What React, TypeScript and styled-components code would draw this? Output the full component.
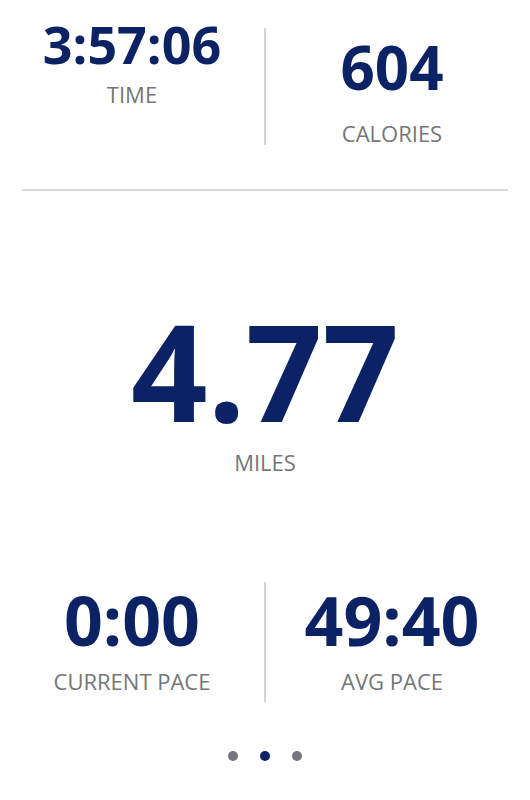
import styled, { createGlobalStyle } from "styled-components";

const NAVY = "#0b2264";
const GREY = "#767676";

const GlobalStyle = createGlobalStyle`
  html, body {
    margin: 0;
    padding: 0;
    background: #ffffff;
    font-family: "Open Sans", "Noto Sans", sans-serif;
  }
`;

type StatProps = {
  value: string;
  label: string;
  size: number;
  offset: number;
  gap: number;
};

function Stat({ value, label, size, offset, gap }: StatProps) {
  return (
    <StatBox $offset={offset}>
      <Value $size={size}>{value}</Value>
      <Label $gap={gap}>{label}</Label>
    </StatBox>
  );
}

export default function App() {
  return (
    <>
      <GlobalStyle />
      <Screen>
        <TopRow>
          <Stat value="3:57:06" label="TIME" size={52} offset={18} gap={13} />
          <Divider $top={28} $height={117} />
          <Stat value="604" label="CALORIES" size={60} offset={37} gap={25} />
        </TopRow>
        <Rule />
        <Main>
          <BigValue>4.77</BigValue>
          <Label $gap={14}>MILES</Label>
        </Main>
        <BottomRow>
          <Stat value="0:00" label="CURRENT PACE" size={68} offset={4} gap={16} />
          <Divider $top={0} $height={120} />
          <Stat value="49:40" label="AVG PACE" size={68} offset={4} gap={16} />
        </BottomRow>
        <Dots>
          <Dot />
          <Dot $active />
          <Dot />
        </Dots>
      </Screen>
    </>
  );
}

const Screen = styled.div`
  width: 530px;
  height: 800px;
  display: flex;
  flex-direction: column;
  overflow: hidden;
`;

const TopRow = styled.div`
  height: 189px;
  display: grid;
  grid-template-columns: 264px 2px 252px;
  align-items: start;
`;

const BottomRow = styled.div`
  margin-top: 109px;
  display: grid;
  grid-template-columns: 264px 2px 252px;
  align-items: start;
`;

const StatBox = styled.div<{ $offset: number }>`
  margin-top: ${(p) => p.$offset}px;
  display: flex;
  flex-direction: column;
  align-items: center;
`;

const Value = styled.div<{ $size: number }>`
  font-size: ${(p) => p.$size}px;
  line-height: 1;
  font-weight: 700;
  color: ${NAVY};
  white-space: nowrap;
`;

const Label = styled.div<{ $gap: number }>`
  margin-top: ${(p) => p.$gap}px;
  font-size: 22px;
  line-height: 1;
  font-weight: 400;
  color: ${GREY};
  white-space: nowrap;
`;

const Divider = styled.div<{ $top: number; $height: number }>`
  margin-top: ${(p) => p.$top}px;
  height: ${(p) => p.$height}px;
  width: 2px;
  background: #d4d4d4;
`;

const Rule = styled.div`
  margin: 0 22px;
  height: 2px;
  background: #d8d8d8;
`;

const Main = styled.div`
  margin-top: 112px;
  display: flex;
  flex-direction: column;
  align-items: center;
`;

const BigValue = styled.div`
  font-size: 134px;
  line-height: 1;
  font-weight: 700;
  color: ${NAVY};
`;

const Dots = styled.div`
  margin-top: 49px;
  display: flex;
  justify-content: center;
  gap: 22px;
`;

const Dot = styled.span<{ $active?: boolean }>`
  width: 10px;
  height: 10px;
  border-radius: 50%;
  background: ${(p) => (p.$active ? NAVY : "#77757c")};
`;
